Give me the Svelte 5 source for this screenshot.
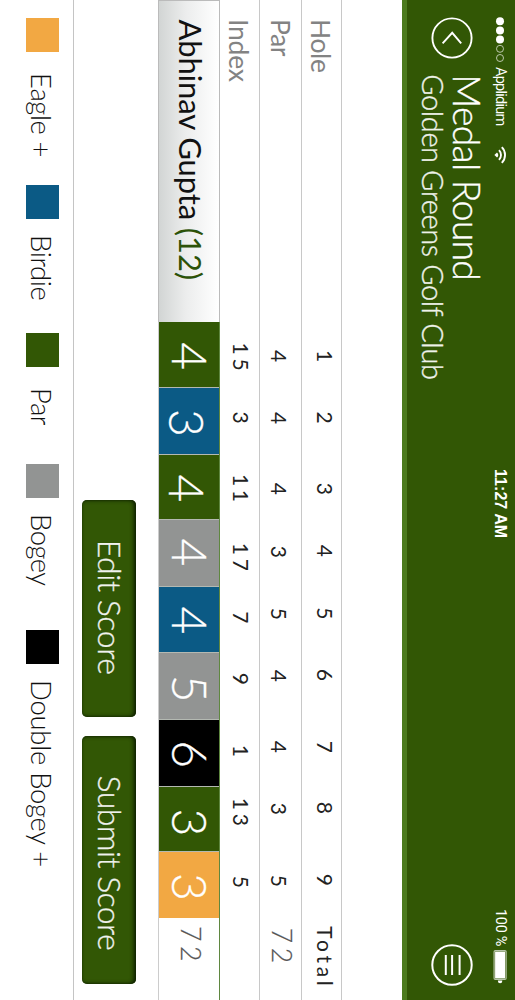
<script>
  const holes = ['1', '2', '3', '4', '5', '6', '7', '8', '9'];
  const pars = ['4', '4', '4', '3', '5', '4', '4', '3', '5'];
  const indexes = ['15', '3', '11', '17', '7', '9', '1', '13', '5'];

  // Centre of every figure along its row; the gap before each one follows from it.
  const holeAt = [356, 417.7, 489, 551, 613.5, 675, 747, 808, 880];
  const parAt = [356, 418, 489, 552, 614, 676, 747, 809, 881];
  const indexAt = [356.5, 417.5, 488, 557, 617.5, 679, 751, 812, 882];
  const LABEL = 120;
  const BOX = 40;
  const gap = (at, i) => at[i] - BOX / 2 - (i ? at[i - 1] + BOX / 2 : LABEL);

  const scores = [
    { n: 4, kind: 'par', w: 66, dx: 1.6, dy: 0 },
    { n: 3, kind: 'birdie', w: 67, dx: 2, dy: 3 },
    { n: 4, kind: 'par', w: 65, dx: 1.4, dy: 2.6 },
    { n: 4, kind: 'bogey', w: 67, dx: -0.6, dy: 0 },
    { n: 4, kind: 'birdie', w: 66, dx: 1, dy: 0 },
    { n: 5, kind: 'bogey', w: 67, dx: 2.6, dy: 0 },
    { n: 6, kind: 'double', w: 67, dx: 1.2, dy: 0 },
    { n: 3, kind: 'par', w: 65, dx: 3.4, dy: 0 },
    { n: 3, kind: 'eagle', w: 66, dx: 2, dy: 0 }
  ];

  const legend = [
    { label: 'Eagle +', kind: 'eagle', gap: 18, pad: 21.5, ls: -0.4 },
    { label: 'Birdie', kind: 'birdie', gap: 185, pad: 16.5, ls: -0.38 },
    { label: 'Par', kind: 'par', gap: 333, pad: 21.5, ls: -0.6 },
    { label: 'Bogey', kind: 'bogey', gap: 464, pad: 16.5, ls: -0.55 },
    { label: 'Double Bogey +', kind: 'double', gap: 630, pad: 16.5, ls: -0.3 }
  ];
</script>

<div class="device">
  <main class="screen">
    <header>
      <div class="status">
        <div class="carrier">
          <svg class="dots" width="48" height="10" viewBox="0 0 48 10">
            <circle cx="4.3" cy="5" r="4" fill="#fff" />
            <circle cx="13.4" cy="5" r="4" fill="#fff" />
            <circle cx="22.6" cy="5" r="4" fill="#fff" />
            <circle cx="31.8" cy="5" r="3.5" fill="none" stroke="#c9d3bd" stroke-width="0.9" />
            <circle cx="41" cy="5" r="3.5" fill="none" stroke="#c9d3bd" stroke-width="0.9" />
          </svg>
          <span class="name">Applidium</span>
          <svg class="wifi" width="18" height="13" viewBox="0 0 18 13" fill="none" stroke="#fff" stroke-width="1.9">
            <path d="M1.2 5.2a11 11 0 0 1 15.6 0" />
            <path d="M4.1 8a7 7 0 0 1 9.8 0" />
            <path d="M9 12.6 6.4 10a3.7 3.7 0 0 1 5.2 0z" fill="#fff" stroke="none" />
          </svg>
        </div>
        <div class="time">11:27 AM</div>
        <div class="power">
          <span>100 %</span>
          <svg width="34" height="14" viewBox="0 0 34 14">
            <rect x="0.6" y="0.9" width="28.8" height="12" rx="1.2" fill="none" stroke="#b9c6aa" stroke-width="1.2" />
            <rect x="1.6" y="1.9" width="26.8" height="10" fill="#fff" />
            <path d="M30.4 4.7h.6a2.2 2.2 0 0 1 0 4.4h-.6z" fill="#fff" />
          </svg>
        </div>
      </div>
      <div class="bar">
        <svg class="back" width="44" height="44" viewBox="0 0 44 44" fill="none" stroke="#fff" stroke-width="1.9">
          <circle cx="22" cy="22" r="19.6" />
          <path d="M27.4 12.8 16.8 21.8l10.6 9.6" />
        </svg>
        <div class="titles">
          <h1>Medal Round</h1>
          <h2>Golden Greens Golf Club</h2>
        </div>
        <svg class="menu" width="44" height="44" viewBox="0 0 44 44" fill="none" stroke="#fff" stroke-width="2">
          <circle cx="22" cy="22" r="19.7" />
          <path d="M12 14.4h20M12 21.9h20M12 28.2h20" />
        </svg>
      </div>
    </header>

    <section class="card">
      <div class="row hole">
        <span class="label" style="letter-spacing:-.37px">Hole</span>
        {#each holes as h, i}<span class="fig" style="margin-left:{gap(holeAt, i)}px">{h}</span>{/each}
        <span class="total">Total</span>
      </div>
      <div class="row pars">
        <span class="label" style="letter-spacing:-.5px">Par</span>
        {#each pars as p, i}<span class="fig" style="margin-left:{gap(parAt, i)}px">{p}</span>{/each}
        <span class="sum">72</span>
      </div>
      <div class="row index">
        <span class="label" style="letter-spacing:-.2px">Index</span>
        {#each indexes as x, i}<span class="fig" style="margin-left:{gap(indexAt, i)}px">{x}</span>{/each}
      </div>
      <div class="player">
        <div class="who">Abhinav Gupta <em>(12)</em></div>
        <div class="scores">
          {#each scores as s}
            <div class="score {s.kind}" style="width:{s.w}px">
              <span style="transform:translate({s.dx}px,{-1.6 + s.dy}px)">{s.n}</span>
            </div>
          {/each}
          <div class="gross">72</div>
        </div>
      </div>
    </section>

    <div class="actions">
      <button class="edit">Edit Score</button>
      <button class="submit">Submit Score</button>
    </div>

    <footer>
      {#each legend as l, i}
        <div class="key" style="width:{(legend[i + 1]?.gap ?? 1000) - l.gap}px">
          <i class={l.kind}></i>
          <span style="margin-left:{l.pad}px;letter-spacing:{l.ls}px">{l.label}</span>
        </div>
      {/each}
    </footer>
  </main>
</div>

<style>
  :global(body) { background: #fff; }
  .device { width: 515px; height: 1000px; overflow: hidden; }
  .screen {
    width: 1000px;
    height: 515px;
    display: flex;
    flex-direction: column;
    transform-origin: 0 0;
    transform: rotate(90deg) translateY(-515px);
    font-family: Lato, sans-serif;
    background: #fff;
    white-space: nowrap;
  }
  svg { display: block; flex: none; }

  header {
    box-sizing: border-box;
    height: 113.3px;
    flex: none;
    background: #325705;
    border-bottom: 5.3px solid #4c7b1e;
    color: #fff;
  }
  .status {
    height: 28.8px;
    display: grid;
    grid-template-columns: 469px 1fr 91px;
    align-items: start;
  }
  .carrier { display: flex; padding-left: 16.7px; }
  .dots { margin-top: 10px; }
  .name {
    width: 60px;
    margin-left: 2.3px;
    font: 400 14.5px/20px Roboto, sans-serif;
    letter-spacing: -0.75px;
    padding-top: 4.5px;
  }
  .wifi { margin: 8px 0 0 19px; }
  .time {
    font: 700 16px/20px "Liberation Sans", sans-serif;
    letter-spacing: 0.05px;
    padding-top: 5px;
  }
  .power { display: flex; font: 400 14.5px/20px Roboto, sans-serif; letter-spacing: -0.3px; }
  .power span { width: 41px; padding-top: 5px; }
  .power svg { margin-top: 8px; }

  .bar { display: flex; }
  .back { margin: 12.2px 0 0 15.7px; }
  .titles { margin-left: 14.6px; width: 868.7px; }
  h1, h2 { margin: 0; font-weight: 300; -webkit-text-stroke: 0.35px currentColor; }
  h1 { font-size: 37.5px; line-height: 38px; letter-spacing: -0.8px; }
  h2 { font-size: 29px; line-height: 30px; letter-spacing: -0.4px; color: #eef2ea; }
  .menu { margin: 12.7px 0 0 0; }

  .card { margin-top: 59.7px; flex: none; }
  .row { box-sizing: border-box; display: flex; border-top: 1.3px solid #c8c8c8; }
  .hole { height: 40px; }
  .pars { height: 42px; }
  .index { height: 40px; }
  .label {
    width: 101px;
    padding-left: 19px;
    font-size: 26.5px;
    line-height: 40px;
    color: #838383;
  }
  .fig, .total { font-size: 21px; letter-spacing: 3.8px; color: #222; }
  .fig { width: 36.2px; padding-left: 3.8px; text-align: center; }
  .hole .fig, .total { line-height: 31px; }
  .pars .fig { line-height: 43px; }
  .index .fig { line-height: 36.4px; }
  .total { margin-left: 26.5px; letter-spacing: 3.74px; }
  .sum, .gross { font-size: 26.5px; font-weight: 300; letter-spacing: 4.6px; color: #555; -webkit-text-stroke: 0.2px #555; }
  .sum { line-height: 39.3px; margin-left: 27px; }

  .player { display: flex; height: 62.5px; }
  .who {
    box-sizing: border-box;
    width: 322px;
    padding-left: 18.5px;
    border: solid #bbb;
    border-width: 1px 0 1px 1px;
    background: linear-gradient(to top, #d2d5d4, #eceded 45%, #fff);
    font-size: 31px;
    line-height: 57.4px;
    letter-spacing: -0.11px;
    color: #111;
  }
  .who em { font-style: normal; color: #2c5208; }
  .scores {
    box-sizing: border-box;
    width: 678px;
    display: flex;
    border-top: 1px solid #5f8740;
    border-bottom: 1px solid #ccc;
  }
  .score {
    box-sizing: border-box;
    border-right: 1px solid #b4b9b2;
    text-align: center;
    font-size: 48px;
    font-weight: 300;
    line-height: 61px;
    color: #fff;
    -webkit-text-stroke: 0.3px #fff;
  }
  .score span { display: block; }
  .score.eagle { border-right: 0; }
  .gross { line-height: 56px; padding-left: 8px; }

  .eagle { background: #f2a843; }
  .birdie { background: #0b5a85; }
  .par { background: #325705; }
  .bogey { background: #929493; }
  .double { background: #000; }

  .actions { display: flex; gap: 19px; height: 61.5px; padding: 22px 0 0 500px; }
  button {
    height: 54px;
    border: 0;
    border-radius: 5px;
    padding: 0 0 3px;
    background: #325705;
    box-shadow: inset 0 2px 4px #0a1a00, inset 0 0 2px #1c3500;
    font: 300 32px/51.2px Lato, sans-serif;
    color: #f0f2ee;
    text-align: left;
    -webkit-text-stroke: 0.3px #f0f2ee;
  }
  .edit { width: 216.5px; padding-left: 39.7px; letter-spacing: -0.41px; }
  .submit { width: 248.5px; padding-left: 40px; letter-spacing: -0.55px; }

  footer { display: flex; border-top: 1.3px solid #c4c4c4; padding: 14px 0 0 18px; flex: 1; }
  .key { display: flex; font-size: 27.5px; font-weight: 300; line-height: 36px; color: #111; }
  .key i { width: 33.6px; height: 33.5px; flex: none; }
</style>
